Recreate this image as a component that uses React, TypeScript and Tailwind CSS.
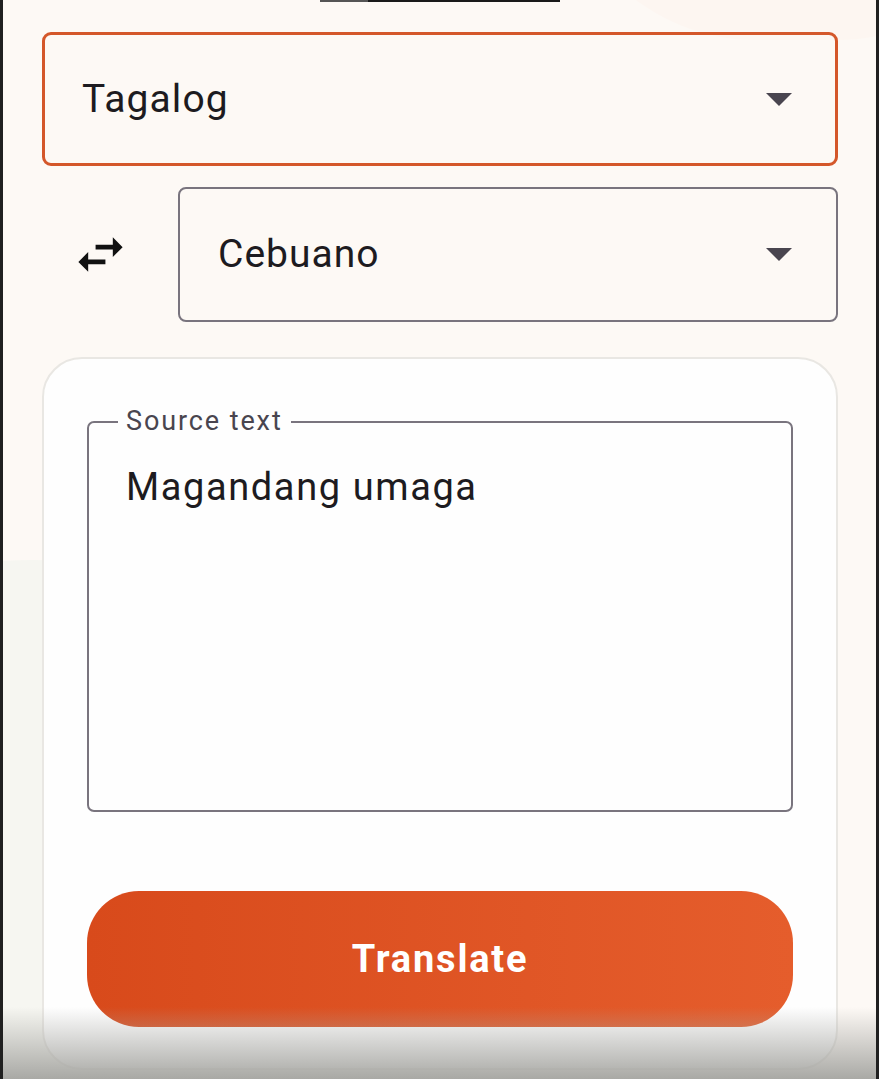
import React from "react";

const Caret: React.FC = () => (
    <svg width="26" height="13" viewBox="0 0 26 13" className="shrink-0">
        <path d="M0 0 L26 0 L13 13 Z" fill="#49454f" />
    </svg>
);

const SwapIcon: React.FC = () => (
    <svg width="59" height="59" viewBox="0 0 24 24">
        <path
            d="M6.99 11L3 15l3.99 4v-3H14v-2H6.99v-3zM21 9l-3.99-4v3H10v2h7.01v3L21 9z"
            fill="#111111"
        />
    </svg>
);

const App: React.FC = () => {
    return (
        <div
            className="flex w-[879px] h-[1079px] overflow-hidden bg-[#1f1f1f]"
            style={{ fontFamily: "Roboto, 'Noto Sans', sans-serif" }}
        >
            <div className="w-[3px] shrink-0 bg-[#202020]" />

            <div className="relative flex-1 bg-[#fdf9f5] overflow-hidden">
                {/* background blobs */}
                <div className="absolute -left-[420px] top-[560px] w-[900px] h-[900px] rounded-full bg-[#f6f6f1]" />
                <div className="absolute -right-[160px] -top-[360px] w-[480px] h-[400px] rounded-full bg-[#fdf6f1]" />

                {/* top bar */}
                <div className="absolute left-[317px] top-0 flex h-[2px] w-[240px]">
                    <div className="w-[48px] bg-[#555]" />
                    <div className="flex-1 bg-[#1a1a1a]" />
                </div>

                <div className="relative flex flex-col pt-[32px] pl-[39px] pr-[38px]">
                    {/* source language */}
                    <div className="flex items-center justify-between h-[134px] border-[3px] border-[#d4572a] rounded-[9px] pl-[37px] pr-[43px]">
                        <span className="text-[39px] text-[#1d1b20] tracking-[1.1px]">Tagalog</span>
                        <Caret />
                    </div>

                    {/* target language */}
                    <div className="flex items-center mt-[21px]">
                        <div className="w-[136px] shrink-0 flex items-center pl-[29px]">
                            <SwapIcon />
                        </div>
                        <div className="flex flex-1 items-center justify-between h-[135px] border-2 border-[#79747e] rounded-[8px] pl-[38px] pr-[44px]">
                            <span className="text-[39px] text-[#1d1b20] tracking-[1px]">Cebuano</span>
                            <Caret />
                        </div>
                    </div>

                    {/* card */}
                    <div className="mt-[35px] h-[713px] bg-[#fefefe] border-2 border-[#e9e7e3] rounded-[40px] px-[43px] pt-[62px]">
                        <div className="relative h-[391px] border-2 border-[#79747e] rounded-[7px] pl-[37px] pt-[40px]">
                            <span className="absolute left-[29px] -top-[19px] bg-[#fefefe] px-[8px] text-[27px] leading-[34px] text-[#49454f] tracking-[1.9px]">
                                Source text
                            </span>
                            <p className="text-[38px] leading-[48px] text-[#1d1b20] tracking-[1.6px]">Magandang umaga</p>
                        </div>

                        <button className="mt-[79px] w-full h-[136px] rounded-[52px] bg-gradient-to-r from-[#d84a1b] to-[#e55d2c] text-white text-[38px] font-bold tracking-[1.8px]">
                            Translate
                        </button>
                    </div>
                </div>

                {/* bottom fade */}
                <div className="absolute left-0 right-0 bottom-0 h-[72px] bg-gradient-to-b from-[#ffffff00] to-[#a9a9a5]" />
            </div>

            <div className="w-[3px] shrink-0 bg-[#202020]" />
        </div>
    );
};

export default App;
